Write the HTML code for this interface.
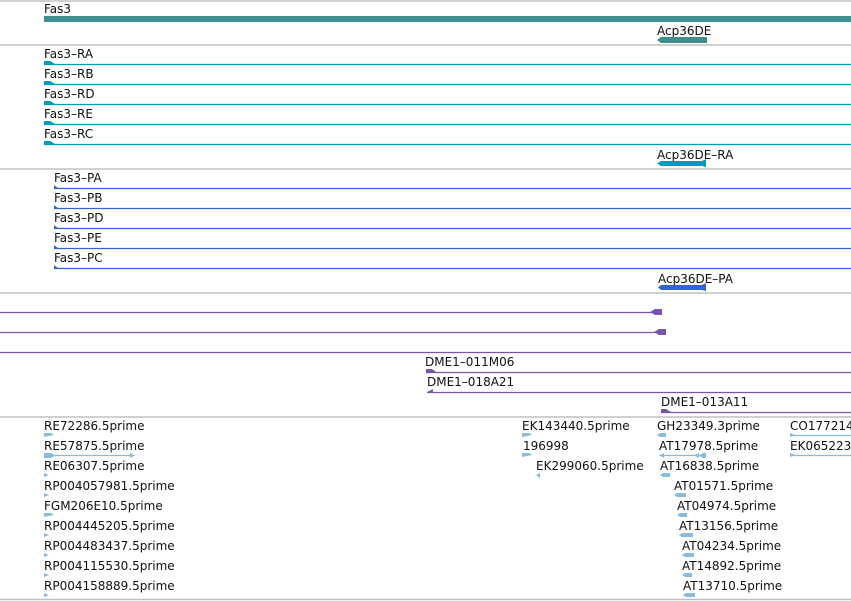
<!DOCTYPE html>
<html><head><meta charset="utf-8"><style>
html,body{margin:0;padding:0;background:#fff;width:851px;height:601px;overflow:hidden}
svg{display:block}
text{font-family:"DejaVu Sans","Liberation Sans",sans-serif;font-size:12px;fill:#111}
</style></head><body>
<svg width="851" height="601" viewBox="0 0 851 601" xmlns="http://www.w3.org/2000/svg">
<g stroke="#c0c0c0" stroke-width="1.5">
<line x1="0" y1="1" x2="851" y2="1"/><line x1="0" y1="45" x2="851" y2="45"/>
<line x1="0" y1="169" x2="851" y2="169"/><line x1="0" y1="293" x2="851" y2="293"/>
<line x1="0" y1="417" x2="851" y2="417"/><line x1="0" y1="599.5" x2="851" y2="599.5"/>
</g>
<!-- gene -->
<text x="44" y="13">Fas3</text>
<rect x="44" y="16" width="807" height="6" fill="#3f8f8f"/>
<text x="657" y="35">Acp36DE</text>
<polygon points="657,40 661,37 707,37 707,43 661,43" fill="#3f8f8f"/>
<!-- transcripts -->
<g fill="#009ac0">
<text x="44" y="58">Fas3–RA</text><text x="44" y="78">Fas3–RB</text><text x="44" y="98">Fas3–RD</text><text x="44" y="118">Fas3–RE</text><text x="44" y="138">Fas3–RC</text>
</g>
<g stroke="#009ac0" stroke-width="1.3">
<line x1="44" y1="64.5" x2="851" y2="64.5"/><line x1="44" y1="84.5" x2="851" y2="84.5"/><line x1="44" y1="104.5" x2="851" y2="104.5"/><line x1="44" y1="124.5" x2="851" y2="124.5"/><line x1="44" y1="144.5" x2="851" y2="144.5"/>
</g>
<g fill="#009ac0">
<polygon points="44,61 50,61 55,64 44,65"/><polygon points="44,81 50,81 55,84 44,85"/><polygon points="44,101 50,101 55,104 44,105"/><polygon points="44,121 50,121 55,124 44,125"/><polygon points="44,141 50,141 55,144 44,145"/>
<polygon points="657,163.5 661,161 702,161 706,159 706,167 702,166 661,166"/>
</g>
<text x="657" y="159">Acp36DE–RA</text>
<!-- proteins -->
<text x="54" y="182">Fas3–PA</text><text x="54" y="202">Fas3–PB</text><text x="54" y="222">Fas3–PD</text><text x="54" y="242">Fas3–PE</text><text x="54" y="262">Fas3–PC</text>
<g stroke="#3366cc" stroke-width="1.3">
<line x1="54" y1="188.5" x2="851" y2="188.5"/><line x1="54" y1="208.5" x2="851" y2="208.5"/><line x1="54" y1="228.5" x2="851" y2="228.5"/><line x1="54" y1="248.5" x2="851" y2="248.5"/><line x1="54" y1="268.5" x2="851" y2="268.5"/>
</g>
<g fill="#3366cc">
<polygon points="54,185 58,188 54,189"/><polygon points="54,205 58,208 54,209"/><polygon points="54,225 58,228 54,229"/><polygon points="54,245 58,248 54,249"/><polygon points="54,265 58,268 54,269"/>
<polygon points="658,287.5 661,285 702,285 706,283 706,291 702,290 661,290"/>
</g>
<text x="658" y="283">Acp36DE–PA</text>
<!-- clones -->
<g stroke="#7755aa" stroke-width="1.3">
<line x1="0" y1="312.5" x2="652" y2="312.5"/><line x1="0" y1="332.5" x2="656" y2="332.5"/><line x1="0" y1="352.5" x2="851" y2="352.5"/>
<line x1="426" y1="372.5" x2="851" y2="372.5"/><line x1="427" y1="392.5" x2="851" y2="392.5"/><line x1="661" y1="412.5" x2="851" y2="412.5"/>
</g>
<g fill="#7755aa">
<polygon points="650,312 655,309 662,309 662,315 655,315"/><polygon points="654,332 659,329 666,329 666,335 659,335"/>
<polygon points="426,369 432,369 436,372 426,373"/><polygon points="427,392 433,389 433,393"/><polygon points="661,409 666,409 671,412 661,413"/>
</g>
<text x="425" y="366">DME1–011M06</text><text x="427" y="386">DME1–018A21</text><text x="661" y="406">DME1–013A11</text>
<!-- ESTs -->
<g>
<text x="44" y="430">RE72286.5prime</text><text x="44" y="450">RE57875.5prime</text><text x="44" y="470">RE06307.5prime</text>
<text x="44" y="490">RP004057981.5prime</text><text x="44" y="510">FGM206E10.5prime</text><text x="44" y="530">RP004445205.5prime</text>
<text x="44" y="550">RP004483437.5prime</text><text x="44" y="570">RP004115530.5prime</text><text x="44" y="590">RP004158889.5prime</text>
<text x="522" y="430">EK143440.5prime</text><text x="523" y="450">196998</text><text x="536" y="470">EK299060.5prime</text>
<text x="657" y="430">GH23349.3prime</text><text x="659" y="450">AT17978.5prime</text><text x="660" y="470">AT16838.5prime</text>
<text x="674" y="490">AT01571.5prime</text><text x="677" y="510">AT04974.5prime</text><text x="679" y="530">AT13156.5prime</text>
<text x="682" y="550">AT04234.5prime</text><text x="682" y="570">AT14892.5prime</text><text x="683" y="590">AT13710.5prime</text>
<text x="790" y="430">CO177214</text><text x="790" y="450">EK065223</text>
</g>
<g stroke="#88bbdd" stroke-width="1.2">
<line x1="50" y1="455.5" x2="134" y2="455.5"/><line x1="661" y1="455.5" x2="706" y2="455.5"/>
<line x1="790" y1="435.5" x2="851" y2="435.5"/><line x1="790" y1="455.5" x2="851" y2="455.5"/>
</g>
<g fill="#88bbdd">
<polygon points="44,433 51,433 54,435 44,437"/>
<polygon points="44,453 51,453 55,455.5 51,458 44,458"/><polygon points="130,453 135,455.5 130,458"/>
<polygon points="44,473 49,475 44,477"/><polygon points="44,493 49,495 44,497"/><polygon points="44,513 51,513 54,515 44,517"/>
<polygon points="44,533 49,535 44,537"/><polygon points="44,553 49,555 44,557"/><polygon points="44,573 49,575 44,577"/><polygon points="44,593 49,595 44,597"/>
<polygon points="522,433 529,433 532,435 522,437"/><polygon points="522,453 529,453 532,455 522,457"/>
<polygon points="536,475 540,473 540,478"/>
<polygon points="657,435 660,433 666,433 666,437 660,437"/>
<polygon points="659,455.5 664,453 664,458"/><polygon points="694,455.5 699,453 699,458"/><polygon points="699,455.5 703,453 706,453 706,458 703,458"/>
<polygon points="660,475 663,473 670,473 670,477 663,477"/>
<polygon points="674,495 677,493 686,493 686,497 677,497"/><polygon points="677,515 680,513 687,513 687,517 680,517"/>
<polygon points="679,535 682,533 693,533 693,537 682,537"/><polygon points="682,555 685,553 694,553 694,557 685,557"/>
<polygon points="682,575 685,573 692,573 692,577 685,577"/><polygon points="683,595 686,593 695,593 695,597 686,597"/>
<polygon points="790,433 795,435 790,437"/><polygon points="790,453 795,455 790,457"/>
</g>
</svg>
</body></html>
